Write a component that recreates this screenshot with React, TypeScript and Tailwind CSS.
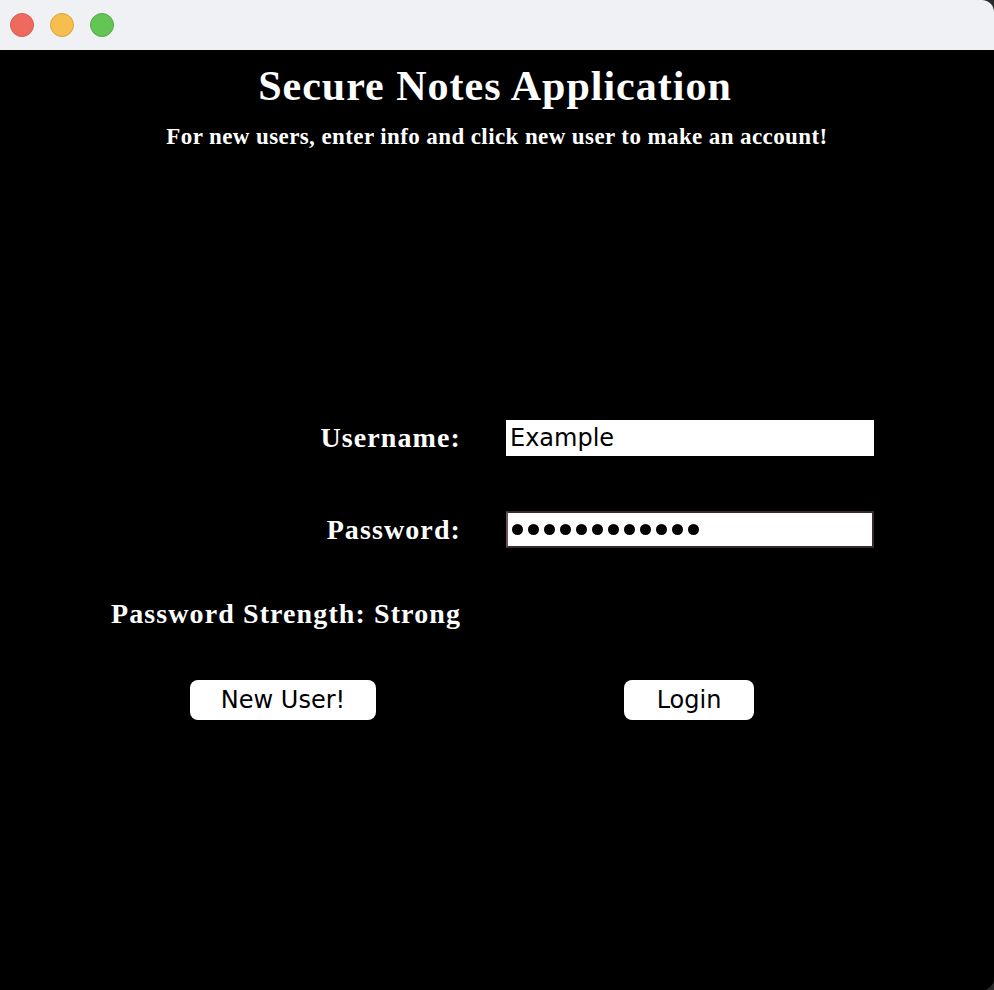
import React from "react";

export default function App() {
  const serif = { fontFamily: '"Liberation Serif", "Times New Roman", serif' };
  const sans = { fontFamily: '"DejaVu Sans", "Lucida Grande", sans-serif' };
  const dots = Array.from({ length: 12 });
  return (
    <div className="w-[994px] h-[990px] bg-[#2b2b2b] overflow-hidden">
      <div className="w-full h-full rounded-tr-[12px] rounded-br-[12px] overflow-hidden flex flex-col bg-black">
        <div className="h-[50px] shrink-0 bg-[#f0f1f5] flex items-center gap-[16px] pl-[10px]">
          <div className="w-[24px] h-[24px] rounded-full bg-[#ee6a5f] border border-[#d65a50]" />
          <div className="w-[24px] h-[24px] rounded-full bg-[#f5be4f] border border-[#d8a43e]" />
          <div className="w-[24px] h-[24px] rounded-full bg-[#62c554] border border-[#53a945]" />
        </div>
        <div className="flex-1 bg-black text-white flex flex-col" style={serif}>
          <div className="text-center font-bold text-[42px] leading-[42px] tracking-[1px] mt-[15px] pr-[4px]">Secure Notes Application</div>
          <div className="text-center font-bold text-[23px] leading-[23px] tracking-[0.4px] mt-[18px]">
            For new users, enter info and click new user to make an account!
          </div>
          <div className="grid grid-cols-[461px_45px_368px] mt-[272px]">
            <div className="text-right font-bold text-[28px] leading-[36px] tracking-[1.1px]">Username:</div>
            <div />
            <div className="h-[36px] bg-white text-black text-[24px] leading-[36px] pl-[4px]" style={sans}>
              Example
            </div>
          </div>
          <div className="grid grid-cols-[461px_45px_368px] mt-[55px]">
            <div className="text-right font-bold text-[28px] leading-[37px] tracking-[1.1px]">Password:</div>
            <div />
            <div className="h-[37px] bg-white border-2 border-[#3a2a2c] border-l-[#6a5556] flex items-center gap-[5px] pl-[4px]">
              {dots.map((_, i) => (
                <span key={i} className="w-[11px] h-[11px] rounded-full bg-black" />
              ))}
            </div>
          </div>
          <div className="grid grid-cols-[461px] mt-[48px]">
            <div className="text-right font-bold text-[28px] leading-[36px] tracking-[1.1px]">Password Strength: Strong</div>
          </div>
          <div className="flex mt-[48px]">
            <button className="ml-[190px] w-[186px] h-[40px] bg-white text-black rounded-[8px] text-[24px] leading-none" style={sans}>
              New User!
            </button>
            <button className="ml-[248px] w-[130px] h-[40px] bg-white text-black rounded-[8px] text-[24px] leading-none" style={sans}>
              Login
            </button>
          </div>
        </div>
      </div>
    </div>
  );
}
